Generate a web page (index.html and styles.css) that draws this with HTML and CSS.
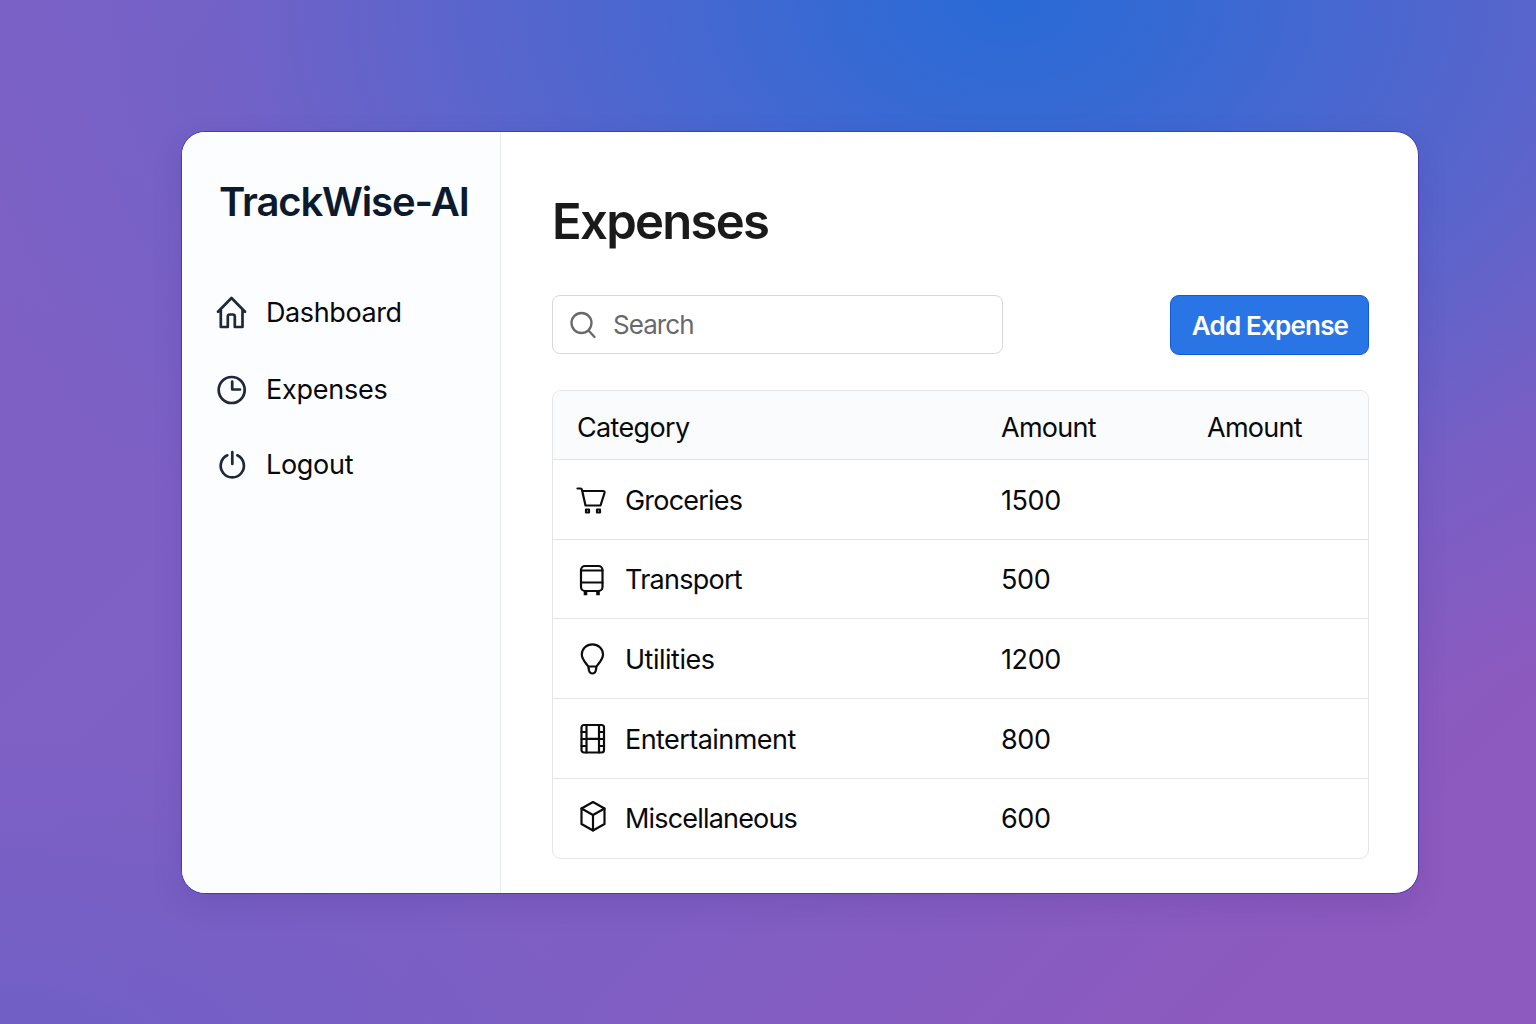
FILE: index.html
```html
<!DOCTYPE html>
<html lang="en">
<head>
<meta charset="utf-8">
<title>TrackWise-AI</title>
<link rel="stylesheet" href="styles.css">
</head>
<body>
<div class="card">
  <aside class="sidebar">
    <div class="brand">TrackWise-AI</div>
    <nav class="nav">
      <a class="nav-item"><svg class="nav-icon" viewBox="0 0 32 32"><path d="M2 14.800 15.500 1 29 14.800M4.800 12.500V30H11.800V19.500Q11.800 17.500 13.800 17.500H16.800Q18.800 17.500 18.800 19.500V30H26.500V12.500"/></svg><span class="t-dashboard">Dashboard</span></a>
      <a class="nav-item expenses"><svg class="nav-icon" viewBox="0 0 32 32"><circle cx="15.700" cy="16" r="13"/><path d="M16.200 7.500V15.500H24"/></svg><span class="t-expenses">Expenses</span></a>
      <a class="nav-item"><svg class="nav-icon" viewBox="0 0 32 32"><path d="M16.300 3V15M11.300 6.300A11.600 11.600 0 1 0 21.300 6.300"/></svg><span class="t-logout">Logout</span></a>
    </nav>
  </aside>
  <main class="main">
    <h1 class="heading">Expenses</h1>
    <div class="toolbar">
      <div class="search"><svg class="search-icon" viewBox="0 0 28 28"><circle cx="12.500" cy="12" r="10"/><path d="M19.500 19.500 25.500 26"/></svg><span>Search</span></div>
      <button class="add">Add Expense</button>
    </div>
    <div class="table">
      <div class="row head"><span class="t-category">Category</span><span class="t-amount">Amount</span><span class="t-amount">Amount</span></div>
      <div class="row"><div class="cat"><svg class="icon" viewBox="0 0 32 32"><path d="M1.500 3.500H4.500Q5.700 3.500 6 5L9.500 20.500H24.500L28.500 8Q28.800 6 27 6H6.300"/><path d="M10 24.500h3v3h-3zM21 24.500h3v3h-3z"/></svg><span class="t-groceries">Groceries</span></div><span class="num">1500</span></div>
      <div class="row transport"><div class="cat"><svg class="icon" viewBox="0 0 32 32"><rect x="5" y="2" width="21.500" height="25" rx="4"/><path d="M5 6.500H26.500M5 18.500H26.500"/><path d="M9.500 28.500V29.500M22 28.500V29.500" stroke-width="3.600" stroke-linecap="square"/></svg><span class="t-transport">Transport</span></div><span class="num">500</span></div>
      <div class="row"><div class="cat"><svg class="icon" viewBox="0 0 32 32"><path d="M12.300 22.500C10 19 5.800 15.500 5.800 10.500A10.600 10.200 0 0 1 27 10.500C27 15.500 22.800 19 20.500 22.500ZM12.300 22.500 13 26.500Q13.800 29.500 16.400 29.500T19.800 26.500L20.500 22.500"/></svg><span class="t-utilities">Utilities</span></div><span class="num">1200</span></div>
      <div class="row"><div class="cat"><svg class="icon" viewBox="0 0 32 32"><rect x="5.500" y="1" width="22.500" height="27.500" rx="2.500"/><path d="M10.500 1V28.500M23 1V28.500M10.500 14.800H23M5.500 8H10.500M5.500 15H10.500M5.500 22H10.500M23 8H28M23 15H28M23 22H28"/></svg><span class="t-entertainment">Entertainment</span></div><span class="num">800</span></div>
      <div class="row misc"><div class="cat"><svg class="icon" viewBox="0 0 32 32"><path d="M17 -1 28.500 5.500V21L17 27.500 5.500 21V5.500Z"/><path d="M5.500 5.500 17 12 28.500 5.500M17 12V27.500"/></svg><span class="t-misc">Miscellaneous</span></div><span class="num">600</span></div>
    </div>
  </main>
</div>
</body>
</html>
```
FILE: styles.css
```css
* { box-sizing: border-box; }
body {
  margin: 0;
  height: 1024px;
  overflow: hidden;
  padding: 131px 0 0 181px;
  font-family: Inter, "Liberation Sans", sans-serif;
  font-size: 27px;
  line-height: 34px;
  color: #08090c;
  background:
    radial-gradient(ellipse 620px 340px at 0 1080px, rgba(102, 96, 200, .65), rgba(102, 96, 200, 0)),
    radial-gradient(ellipse 1100px 760px at 1010px 0, #296ad7 0, rgba(48, 106, 212, .95) 13%, rgba(60, 105, 211, .84) 30%, rgba(70, 104, 208, .68) 48%, rgba(90, 100, 205, .32) 72%, rgba(110, 97, 200, 0) 100%),
    linear-gradient(135deg, #7e61c5 0%, #7f5ec3 62%, #8d5abf 88%);
}
.card {
  width: 1238px;
  height: 763px;
  display: flex;
  border: 1px solid #4a39b0;
  border-radius: 24px;
  background: #fff;
  overflow: hidden;
  box-shadow: 0 10px 30px rgba(50, 30, 120, .14);
}
.sidebar {
  width: 319px;
  flex: none;
  padding: 45px 0 0 34px;
  background: #fcfdfe;
  border-right: 1px solid #e9ebee;
}
.brand {
  padding-left: 3px;
  font-size: 40px;
  line-height: 50px;
  font-weight: 600;
  letter-spacing: -1.12px;
  color: #0c1a2d;
  white-space: nowrap;
}
.nav { display: flex; flex-direction: column; gap: 42px; margin-top: 69px; }
.nav-item { display: flex; align-items: center; gap: 18px; height: 34px; }
.expenses { height: 36px; margin-bottom: -2px; }
.nav-icon { width: 32px; height: 32px; stroke: #20293a; stroke-width: 2.7; }
svg { flex: none; fill: none; overflow: visible; stroke: #0c0c0c; stroke-linecap: round; stroke-linejoin: round; }
.main { flex: 1; padding: 60px 49px 0 51px; }
.heading {
  margin: 0;
  font-size: 49px;
  line-height: 60px;
  font-weight: 600;
  letter-spacing: -1.7px;
  color: #1a1a1a;
}
.toolbar { display: flex; justify-content: space-between; margin-top: 43px; }
.search {
  width: 451px;
  height: 59px;
  display: flex;
  align-items: center;
  gap: 16px;
  padding: 1px 0 0 16px;
  border: 1px solid #d6d8da;
  border-radius: 8px;
  color: #68696c;
  font-size: 26px;
  letter-spacing: -.95px;
}
.search-icon { width: 28px; height: 28px; stroke: #68696c; stroke-width: 2.3; }
.add {
  width: 199px;
  height: 60px;
  padding: 2px 0 0 1px;
  border: 1px solid #1159dc;
  border-radius: 9px;
  background: #2a75e6;
  color: #fff;
  font: 600 26px/34px Inter, "Liberation Sans", sans-serif;
  letter-spacing: -.8px;
  white-space: nowrap;
}
.table {
  margin-top: 35px;
  height: 469px;
  display: grid;
  grid-template-rows: 69px 80px 79px 80px 80px 79px;
  border: 1px solid #e2e4e6;
  border-radius: 9px;
  overflow: hidden;
}
.row {
  display: grid;
  grid-template-columns: 424px 206px 1fr;
  align-items: center;
  padding: 3px 0 0 24px;
  border-bottom: 1px solid #e2e4e6;
}
.row:last-child { border-bottom: 0; }
.head { background: #fafbfc; padding-top: 5px; }
.transport { padding-top: 1px; }
.misc { padding-top: 1px; }
.cat { display: flex; align-items: center; gap: 17px; }
.icon { width: 32px; height: 32px; stroke-width: 2.2; margin-left: -1px; }
.num { letter-spacing: -.4px; }
.t-dashboard { letter-spacing: -.4px; }
.t-expenses { letter-spacing: -.25px; }
.t-logout { letter-spacing: -.3px; }
.t-category { letter-spacing: -.65px; }
.t-amount { letter-spacing: -.75px; }
.t-groceries { letter-spacing: -.8px; }
.t-transport { letter-spacing: -.75px; }
.t-utilities { letter-spacing: -.5px; }
.t-entertainment { letter-spacing: -.55px; }
.t-misc { letter-spacing: -.82px; }
```
